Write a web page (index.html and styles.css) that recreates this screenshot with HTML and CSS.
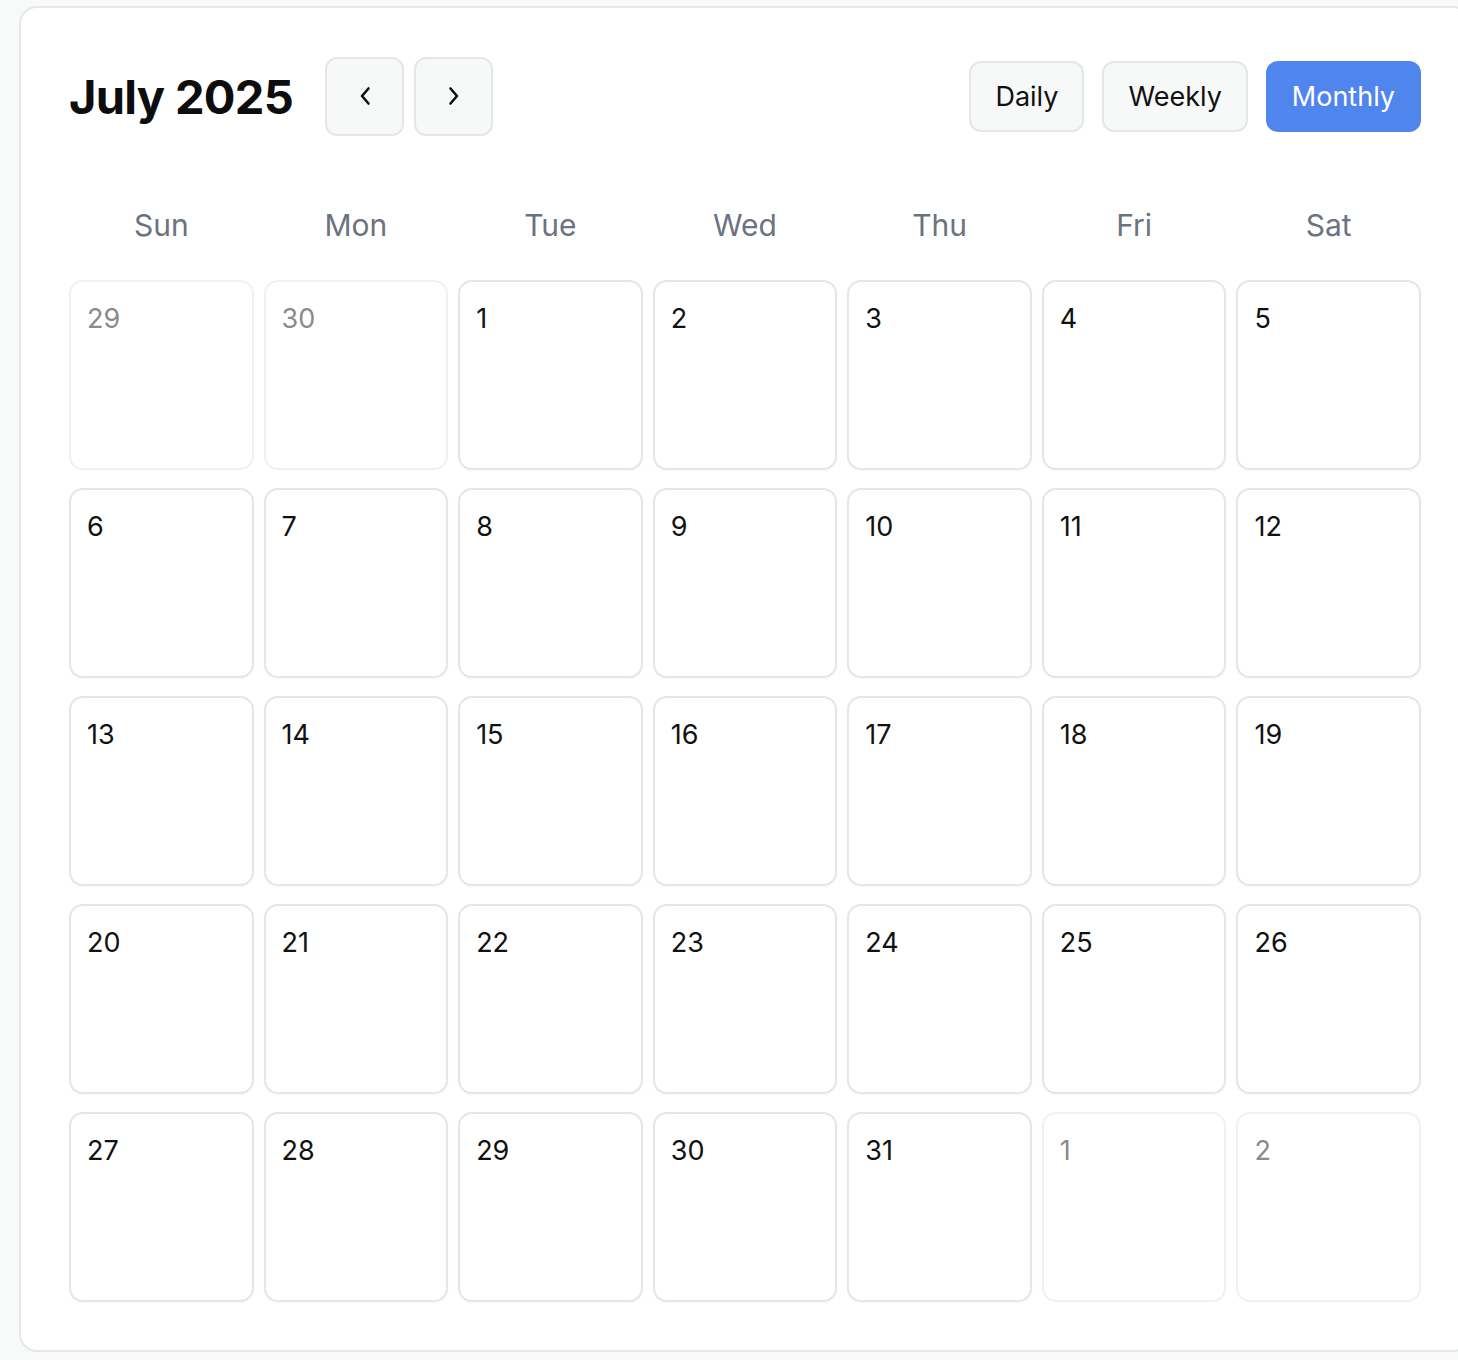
FILE: index.html
```html
<!DOCTYPE html>
<html lang="en">
<head>
<meta charset="utf-8">
<title>Calendar</title>
<link rel="stylesheet" href="styles.css">
</head>
<body>
<div class="card">
  <div class="header">
    <div class="header-left">
      <h1 class="title">July 2025</h1>
      <button class="nav-btn" aria-label="Previous">
        <svg width="14" height="20" viewBox="0 0 14 20"><path d="M10.5 2.5 L4 10 L10.5 17.5" fill="none" stroke="#111" stroke-width="2.6" stroke-linecap="round" stroke-linejoin="round"/></svg>
      </button>
      <button class="nav-btn" aria-label="Next">
        <svg width="14" height="20" viewBox="0 0 14 20"><path d="M3.5 2.5 L10 10 L3.5 17.5" fill="none" stroke="#111" stroke-width="2.6" stroke-linecap="round" stroke-linejoin="round"/></svg>
      </button>
    </div>
    <div class="views">
      <button class="view-btn">Daily</button>
      <button class="view-btn">Weekly</button>
      <button class="view-btn active">Monthly</button>
    </div>
  </div>
  <div class="weekdays">
    <div>Sun</div><div>Mon</div><div>Tue</div><div>Wed</div><div>Thu</div><div>Fri</div><div>Sat</div>
  </div>
  <div class="grid">
    <div class="cell other">29</div>
    <div class="cell other">30</div>
    <div class="cell">1</div>
    <div class="cell">2</div>
    <div class="cell">3</div>
    <div class="cell">4</div>
    <div class="cell">5</div>
    <div class="cell">6</div>
    <div class="cell">7</div>
    <div class="cell">8</div>
    <div class="cell">9</div>
    <div class="cell">10</div>
    <div class="cell">11</div>
    <div class="cell">12</div>
    <div class="cell">13</div>
    <div class="cell">14</div>
    <div class="cell">15</div>
    <div class="cell">16</div>
    <div class="cell">17</div>
    <div class="cell">18</div>
    <div class="cell">19</div>
    <div class="cell">20</div>
    <div class="cell">21</div>
    <div class="cell">22</div>
    <div class="cell">23</div>
    <div class="cell">24</div>
    <div class="cell">25</div>
    <div class="cell">26</div>
    <div class="cell">27</div>
    <div class="cell">28</div>
    <div class="cell">29</div>
    <div class="cell">30</div>
    <div class="cell">31</div>
    <div class="cell other">1</div>
    <div class="cell other">2</div>
  </div>
</div>
</body>
</html>
```

FILE: styles.css
```css
html, body {
  margin: 0;
  padding: 0;
  overflow: hidden;
}
body {
  background: #f8f9f9;
  font-family: Inter, "Noto Sans", "Liberation Sans", sans-serif;
  color: #111;
  padding: 6px 0 0 19px;
  width: 1500px;
}
.card {
  box-sizing: border-box;
  width: 1452px;
  background: #fff;
  border: 2px solid #e4e7eb;
  border-radius: 18px;
  padding: 48px 48px 48px 48px;
}
.header {
  width: 1352px;
  display: flex;
  align-items: center;
  justify-content: space-between;
  height: 80px;
}
.header-left {
  display: flex;
  align-items: center;
  gap: 10px;
}
.title {
  margin: 0 22px 0 0;
  font-size: 47px;
  font-weight: 700;
  letter-spacing: -0.7px;
  color: #0d0d0d;
}
.nav-btn {
  box-sizing: border-box;
  width: 79px;
  height: 79px;
  background: #f7f8f8;
  border: 2px solid #e3e6ea;
  border-radius: 12px;
  display: flex;
  align-items: center;
  justify-content: center;
  padding: 0;
}
.views {
  display: flex;
  gap: 18px;
  align-items: center;
}
.view-btn {
  box-sizing: border-box;
  height: 71px;
  padding: 0 24px;
  font-family: inherit;
  font-size: 27px;
  color: #111;
  background: #f7f8f8;
  border: 2px solid #e3e6ea;
  border-radius: 12px;
}
.view-btn.active {
  background: #5085ed;
  border-color: #5085ed;
  color: #fff;
}
.weekdays {
  width: 1352px;
  display: grid;
  grid-template-columns: repeat(7, 1fr);
  column-gap: 10px;
  margin-top: 56px;
  margin-bottom: 22px;
  height: 66px;
  align-items: center;
  text-align: center;
  font-size: 30px;
  color: #6b7280;
}
.grid {
  width: 1352px;
  display: grid;
  grid-template-columns: repeat(7, 1fr);
  column-gap: 10px;
  row-gap: 18px;
}
.cell {
  box-sizing: border-box;
  height: 190px;
  border: 2px solid #e3e6ea;
  border-radius: 14px;
  padding: 16px 16px 14px;
  font-size: 27px;
  line-height: 42px;
  color: #111;
  box-shadow: 0 1px 2px rgba(0,0,0,0.04);
}
.cell.other {
  border-color: #f0f1f3;
  color: #8a8a8a;
  box-shadow: none;
}
```
